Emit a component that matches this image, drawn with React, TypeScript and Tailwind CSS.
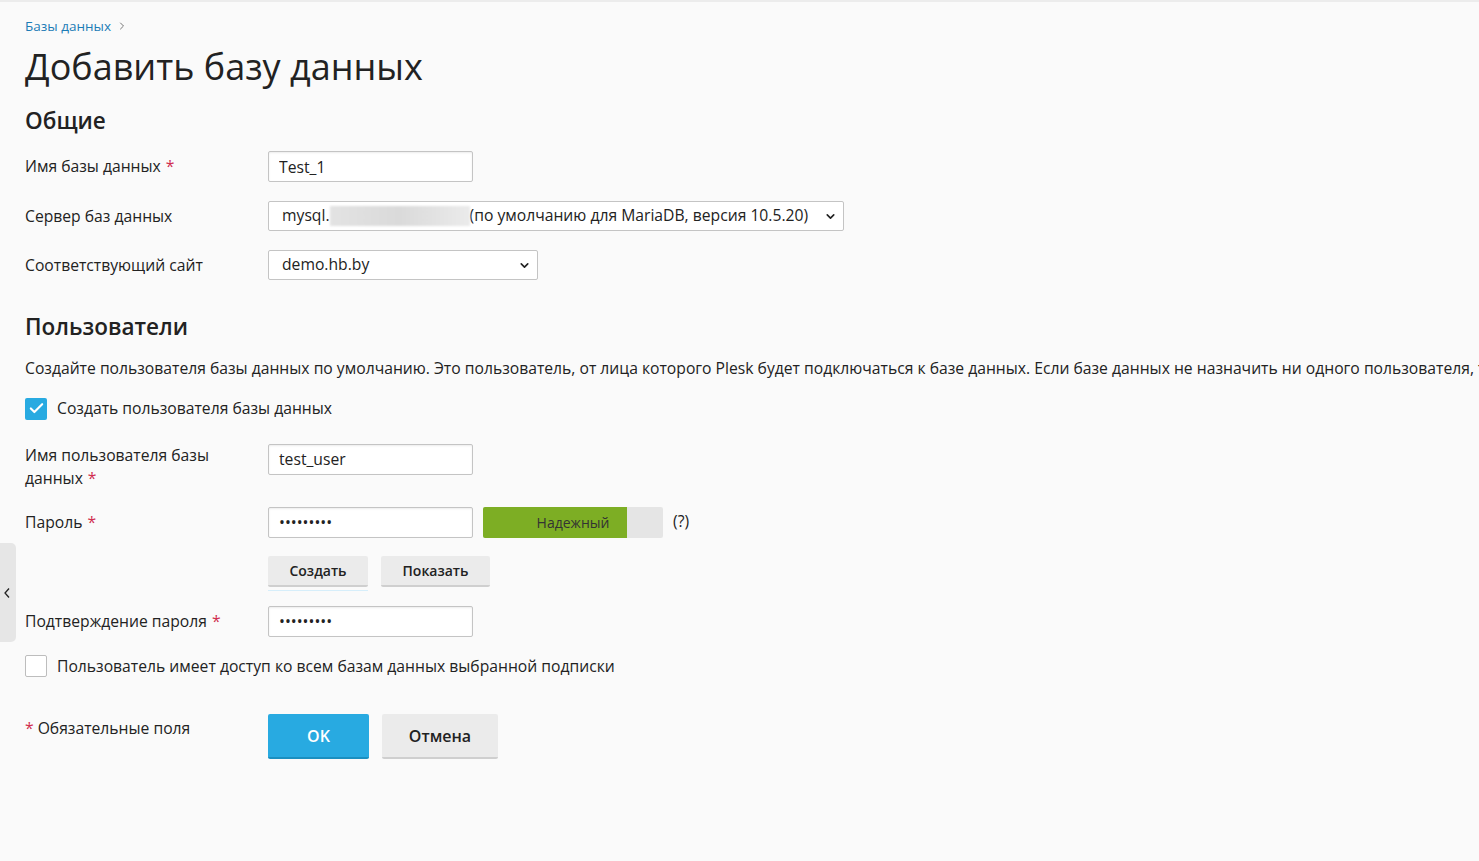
import { Check, ChevronDown, ChevronRight } from "lucide-react";

const inputCls =
  "h-[31px] w-[205px] rounded-[2px] border border-[#c4c4c4] bg-white px-[10px] text-[15.7px] text-[#222] shadow-[inset_0_1px_2px_rgba(0,0,0,0.08)] outline-none";

const grayBtn =
  "h-[31px] rounded-[2px] border-b-2 border-[#cfcfcf] bg-[#ebebeb] text-[14px] font-semibold text-[#222]";

function Req() {
  return <span className="ml-[5px] text-[#d02d4f]">*</span>;
}

function Row({
  label,
  children,
  className = "",
}: {
  label: React.ReactNode;
  children: React.ReactNode;
  className?: string;
}) {
  return (
    <div className={"flex " + className}>
      <div className="w-[243px] shrink-0 pr-[30px] text-[15.7px] leading-[23px] text-[#222] whitespace-normal">
        {label}
      </div>
      <div className="flex items-center gap-[10px]">{children}</div>
    </div>
  );
}

function Select({ width, children }: { width: string; children: React.ReactNode }) {
  return (
    <div
      className={
        "flex h-[30px] items-center justify-between rounded-[2px] border border-[#c4c4c4] bg-white pl-[13px] pr-[6px] text-[15.7px] text-[#222] " +
        width
      }
    >
      <div className="flex items-center">{children}</div>
      <ChevronDown size={13} strokeWidth={3} className="text-[#222]" />
    </div>
  );
}

function Checkbox({ checked, label }: { checked: boolean; label: string }) {
  return (
    <label className="flex items-center gap-[10px] text-[15.7px] text-[#222]">
      {checked ? (
        <span className="grid h-[22px] w-[22px] place-items-center rounded-[2px] bg-[#28aae1]">
          <Check size={17} strokeWidth={3} className="text-white" />
        </span>
      ) : (
        <span className="h-[22px] w-[22px] rounded-[2px] border border-[#bdbdbd] bg-white" />
      )}
      {label}
    </label>
  );
}

export default function App() {
  return (
    <div
      className="relative min-h-[861px] w-full overflow-hidden border-t-2 border-[#ececec] bg-[#fafafa] text-[#222]"
      style={{ fontFamily: '"Open Sans", "Noto Sans", sans-serif' }}
    >
      {/* sidebar toggle */}
      <div className="absolute left-0 top-[541px] flex h-[99px] w-[16px] items-center justify-center rounded-r-[5px] bg-[#e6e6e6]">
        <svg width="8" height="12" viewBox="0 0 8 12" className="-ml-[3px]">
          <polyline points="6,1.5 2,6 6,10.5" fill="none" stroke="#222" strokeWidth="1.3" />
        </svg>
      </div>

      <div className="whitespace-nowrap pl-[25px] pt-[12px]">
        <div className="flex items-center gap-[5px] text-[13.5px] leading-[24px] text-[#1c7cb6]">
          Базы данных
          <ChevronRight size={12} strokeWidth={2} className="text-[#777]" />
        </div>
        <h1 className="mt-[5px] text-[36px] leading-[48px] font-normal text-[#222]">
          Добавить базу данных
        </h1>

        <h2 className="mt-[15px] text-[22.5px] leading-[30px] font-semibold">Общие</h2>

        <div className="mt-[15px] flex flex-col gap-[19px]">
          <Row label={<>Имя базы данных<Req /></>} className="items-center">
            <input className={inputCls} defaultValue="Test_1" />
          </Row>
          <Row label="Сервер баз данных" className="items-center">
            <Select width="w-[576px]">
              <span>mysql.</span>
              <span className="h-[20px] w-[140px] bg-gradient-to-r from-[#e3e3e3] via-[#dadada] to-[#ebebeb] blur-[1px]" />
              <span>(по умолчанию для MariaDB, версия 10.5.20)</span>
            </Select>
          </Row>
          <Row label="Соответствующий сайт" className="items-center">
            <Select width="w-[270px]">demo.hb.by</Select>
          </Row>
        </div>

        <h2 className="mt-[32px] text-[22.5px] leading-[30px] font-semibold">Пользователи</h2>

        <p className="mt-[15px] text-[15.7px] leading-[22px]">
          Создайте пользователя базы данных по умолчанию. Это пользователь, от лица которого Plesk
          будет подключаться к базе данных. Если базе данных не назначить ни одного пользователя,
          то вы не сможете подключиться к базе данных.
        </p>

        <div className="mt-[18px]">
          <Checkbox checked label="Создать пользователя базы данных" />
        </div>

        <div className="mt-[23px] flex flex-col">
          <Row label={<>Имя пользователя базы данных<Req /></>} className="items-start">
            <input className={inputCls} defaultValue="test_user" />
          </Row>

          <Row label={<>Пароль<Req /></>} className="mt-[17px] items-center">
            <input className={inputCls} type="password" defaultValue="123456789" />
            <div className="relative flex h-[31px] w-[180px] rounded-[2px] bg-[#e5e5e5]">
              <div className="h-full w-[144px] rounded-l-[2px] bg-[#7dae24]" />
              <span className="absolute inset-0 flex items-center justify-center text-[14px] text-[#333]">
                Надежный
              </span>
            </div>
            <span className="text-[15.7px]">(?)</span>
          </Row>

          <div className="mt-[18px] flex gap-[13px] pl-[243px]">
            <div className="flex flex-col">
              <button className={grayBtn + " w-[100px]"}>Создать</button>
              <div className="mt-[3px] h-[1px] w-[100px] bg-[#d6eefa]" />
            </div>
            <button className={grayBtn + " w-[109px]"}>Показать</button>
          </div>

          <Row label={<>Подтверждение пароля<Req /></>} className="mt-[15px] items-center">
            <input className={inputCls} type="password" defaultValue="123456789" />
          </Row>
        </div>

        <div className="mt-[18px]">
          <Checkbox checked={false} label="Пользователь имеет доступ ко всем базам данных выбранной подписки" />
        </div>

        <div className="mt-[36px] flex items-start">
          <div className="w-[243px] pt-[3px] text-[15.7px]">
            <span className="mr-[4px] text-[#d02d4f]">*</span>Обязательные поля
          </div>
          <button className="h-[45px] w-[101px] rounded-[2px] border-b-2 border-[#1a8fc0] bg-[#28aae1] text-[16px] font-semibold text-white">
            OK
          </button>
          <button className="ml-[13px] h-[45px] w-[116px] rounded-[2px] border-b-2 border-[#cfcfcf] bg-[#ebebeb] text-[16px] font-semibold text-[#222]">
            Отмена
          </button>
        </div>
      </div>
    </div>
  );
}
